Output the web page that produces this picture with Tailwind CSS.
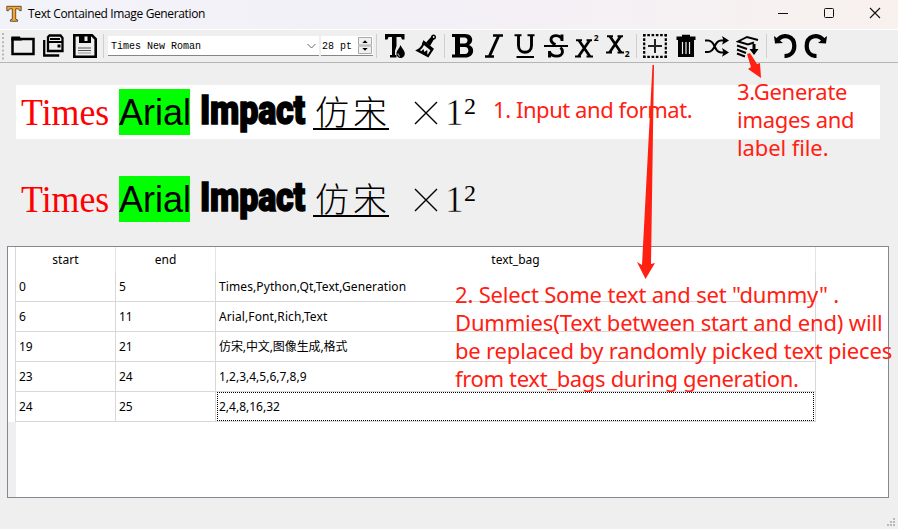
<!DOCTYPE html>
<html lang="en">
<head>
<meta charset="utf-8">
<title>Text Contained Image Generation</title>
<script src="https://cdn.jsdelivr.net/npm/@tailwindcss/browser@4"></script>
</head>
<body class="w-[898px] h-[529px] overflow-hidden bg-[#efefef] text-black font-['Noto_Sans','Noto_Sans_CJK_SC',sans-serif]">
<div class="relative w-[898px] h-[529px] flex flex-col overflow-hidden">

  <!-- Title bar -->
  <header class="h-[29px] shrink-0 flex items-center bg-linear-to-r from-[#f2f3f9] via-[#f3f0f7] to-[#f8f1ee]">
    <svg class="ml-[6px] w-4 h-[18px] -mt-[2px] shrink-0" viewBox="0 0 16 18"><path d="M.8 1.3h14.4v4.4h-1.7l-1-1.9H9.7v10.4l1.9.6v1.500H4.4v-1.500l1.900-.6V3.800H3.500l-1 1.900H.8z" fill="#f9a531" stroke="#44351f" stroke-width=".8"/></svg>
    <span class="ml-[6px] -mt-px w-[178px] text-[12px] leading-4 whitespace-nowrap font-['Open_Sans','Noto_Sans',sans-serif] tracking-[-0.36px]">Text Contained Image Generation</span>
    <div class="ml-auto mr-[17px] -mt-[3px] flex items-center gap-[34px]">
      <svg class="w-[12px] h-[12px]" viewBox="0 0 12 12"><path d="M1 6.500h10" stroke="#111"/></svg>
      <svg class="w-[12px] h-[12px]" viewBox="0 0 12 12"><rect x="1.500" y="1.500" width="9" height="9" rx="1" fill="none" stroke="#111"/></svg>
      <svg class="w-[12px] h-[12px]" viewBox="0 0 12 12"><path d="M1 1l10 10M11 1L1 11" stroke="#111" stroke-width="1.100"/></svg>
    </div>
  </header>

  <!-- Toolbar -->
  <div class="h-[34px] shrink-0 flex items-start border-t border-t-white border-b border-b-[#b5b5b5] pt-[4px] pl-[2px]">
    <svg class="w-[3px] h-[27px] mr-[6px] shrink-0 -mt-px" viewBox="0 0 3 27"><path d="M1 0v27" stroke="#b8b8b8" stroke-width="2" stroke-dasharray="2 2.1"/></svg>
    <svg class="w-6 h-6 mr-[7px] shrink-0" viewBox="0 0 24 24"><path d="M1.500 20V5h21v15z" fill="none" stroke="#000" stroke-width="2.500"/><path d="M.3 2.500h8.500L11 6.500H.3z"/></svg>
    <svg class="w-6 h-6 mr-[7px] shrink-0" viewBox="0 0 24 24"><path d="M6 3l1.500-1.500h11l2 2.500v13H6z" fill="none" stroke="#000" stroke-width="2.300"/><path d="M6 8h14M8 5h10" stroke="#000" stroke-width="2"/><path d="M15.500 10.500h3v3h-3z"/><path d="M2.200 6v15.500h15" fill="none" stroke="#000" stroke-width="2.300"/></svg>
    <svg class="w-6 h-6 mr-[7px] shrink-0" viewBox="0 0 24 24"><path d="M1.300 1.300h17.700l3.700 3.700v17.700H1.300z" fill="none" stroke="#000" stroke-width="2.600"/><path d="M6 1h12v8H6z"/><path d="M11.500 2.500h3v4.500h-3z" fill="#efefef"/><path d="M5 14h13M5 16.500h13" stroke="#555" stroke-width="1.200"/><path d="M5 19h13" stroke="#999"/></svg>
    <i class="w-px h-6 -ml-px mr-[4px] bg-[#cfcfcf] shrink-0"></i>

    <div class="mt-[2px] w-[211px] h-[20px] mr-[2px] shrink-0 bg-white border-b border-[#868686] flex items-center pl-[3px] pr-[3px] font-['Liberation_Mono',monospace] text-[10px]">
      <span class="whitespace-nowrap mt-[2px]">Times New Roman</span>
      <svg class="ml-auto w-[9px] h-[6px]" viewBox="0 0 9 6"><path d="M.5 1l4 4 4-4" fill="none" stroke="#666"/></svg>
    </div>
    <div class="mt-[2px] w-[52px] h-[20px] mr-[4px] shrink-0 bg-white border-b border-[#868686] flex items-center pl-[1px] font-['Liberation_Mono',monospace] text-[10px]">
      <span class="whitespace-nowrap mt-[2px]">28 pt</span>
      <svg class="ml-auto mr-[1px] w-[14px] h-[17px]" viewBox="0 0 14 17"><path d="M.5.5h13v7.500H.5zM.5 9h13v7.500H.5z" fill="#f0f0f0" stroke="#aaa"/><path d="M4.300 6L7 3.300 9.700 6zM4.300 11L7 13.700 9.700 11z"/></svg>
    </div>
    <i class="w-px h-6 -ml-px mr-[6px] bg-[#cfcfcf] shrink-0"></i>

    <svg class="w-6 h-6 mr-[7px] shrink-0" viewBox="0 0 24 24"><path d="M2 0h19.500v5.500H19L18 3h-4.500v9l-1.500 5v4h1.500v2.500H7V21h2V3H5.500l-1 2.500H2z"/><path d="M17.500 11c1.500 3.500 4.300 5.500 4.300 8.700a4.200 4.200 0 0 1-8.400 0c0-3.200 3-5.200 4.100-8.700z"/><path d="M15 19.500c0 1.500.7 2.300 2 2.700" fill="none" stroke="#efefef" stroke-width=".9"/></svg>
    <svg class="w-6 h-6 mr-[7px] shrink-0" viewBox="0 0 24 24"><path d="M12 8.500L17 3c0-3.500 5.500-3.500 5 .5-.2 1.500-1.500 2-2.500 2.500L16 12z"/><path d="M10 8L18.500 15l-4.500 7L3.500 16.500C6.500 15 9 12 10 8z" fill="none" stroke="#000" stroke-width="2.100"/><path d="M4.500 16l3 1 2-2 .8 3 3-2v5l-1 1z"/><path d="M9.500 6.500l10 8.500-1.500 2.500-10-8z"/><circle cx="19.700" cy="3" r=".9" fill="#efefef"/></svg>
    <i class="w-px h-6 -ml-px mr-[6px] bg-[#cfcfcf] shrink-0"></i>

    <svg class="w-6 h-6 mr-[7px] shrink-0" viewBox="0 0 24 24"><path fill-rule="evenodd" d="M1 0h13c8.500 0 9 8.500 4 11 6.500 2 5.500 12.500-4 12.500H1v-3h3V3H1zM9 3.500v6h4.500c4 0 4-6 0-6zM9 13v7h5c4.500 0 4.500-7 0-7z"/></svg>
    <svg class="w-6 h-6 mr-[7px] shrink-0" viewBox="0 0 24 24"><path d="M11 1.500h10M3 22.500h9" stroke="#000" stroke-width="2.600"/><path d="M16.500 2L7.500 22" stroke="#000" stroke-width="3"/></svg>
    <svg class="w-6 h-6 mr-[7px] shrink-0" viewBox="0 0 24 24"><path d="M1.500 1.200h7M14.500 1.200h7M3.500 23h17.500" stroke="#000" stroke-width="2"/><path d="M5.500 1v10.500c0 9 13 9 13 0V1" fill="none" stroke="#000" stroke-width="2.900"/></svg>
    <svg class="w-6 h-6 mr-[7px] shrink-0" viewBox="0 0 24 24"><path d="M18 7V.5M18 6C17 .5 7 0 7 5.500c0 3 2 4 4.500 5M5.500 23.500V17M5.500 18c2 5.500 13 5.500 13-.3 0-2-.8-3.200-2-4.200" fill="none" stroke="#000" stroke-width="2.900"/><path d="M0 12h24" stroke="#000" stroke-width="2"/></svg>
    <svg class="w-6 h-6 mr-[7px] shrink-0 overflow-visible" viewBox="0 0 24 24"><path d="M1 6.300h6M11.500 6.300H17M0 22.500h6M11.500 22.500H18" stroke="#000" stroke-width="2.100"/><path d="M4 6.500l11 16M14.500 6.500L3.500 22.500" stroke="#000" stroke-width="2.700"/><text x="18.800" y="7" font-size="8.500" font-weight="700" font-family="Noto Sans">2</text></svg>
    <svg class="w-6 h-6 mr-[7px] shrink-0 overflow-visible" viewBox="0 0 24 24"><path d="M1 2.200h6M11.500 2.200H17M0 18.500h6M11.500 18.500H18" stroke="#000" stroke-width="2.100"/><path d="M4 2.500l11 16M14.500 2.500L3.500 18.500" stroke="#000" stroke-width="2.700"/><text x="18.800" y="23" font-size="8.500" font-weight="700" font-family="Noto Sans">2</text></svg>
    <i class="w-px h-6 -ml-px mr-[6px] bg-[#cfcfcf] shrink-0"></i>

    <svg class="w-6 h-6 mr-[7px] shrink-0" viewBox="0 0 24 24"><path d="M0 1.200h24M0 22.800h24" stroke="#000" stroke-width="2.200" stroke-dasharray="2.600 1.680"/><path d="M1.200 0v24M22.800 0v24" stroke="#000" stroke-width="2.200" stroke-dasharray="2.600 1.680"/><path d="M12 5v14M5 12h14" stroke="#222" stroke-width="2"/></svg>
    <svg class="w-6 h-6 mr-[7px] shrink-0" viewBox="0 0 24 24"><path d="M8 .8h8v1.700h5.500V6h-19V2.500H8z"/><path d="M4 5h16v18H4z"/><path d="M8.500 8v12M12 8v12M15.500 8v12" stroke="#efefef" stroke-width="1.200"/></svg>
    <svg class="w-6 h-6 mr-[7px] shrink-0" viewBox="0 0 24 24"><path d="M0 6.500h3c8 0 5.500 12 13 12h5M0 18h3c8 0 5.500-11.500 13-11.500h5" fill="none" stroke="#000" stroke-width="2.200"/><path d="M17 2l7 4.500-7 4.300 1.500-4.300zM17 14l7 4.500-7 4.300 1.500-4.300z"/></svg>
    <svg class="w-6 h-6 mr-[7px] shrink-0" viewBox="0 0 24 24"><path d="M22 6L11 3 2 7.500l10 3 6-2M1 11.500l10 3.500M1 15.500l9 3.500M1 19.500l8 3" fill="none" stroke="#000" stroke-width="1.900"/><path d="M18 10v7" stroke="#000" stroke-width="3"/><path d="M13.500 15h9l-4.500 6z"/></svg>
    <i class="w-px h-6 -ml-px mr-[6px] bg-[#cfcfcf] shrink-0"></i>

    <svg class="w-6 h-6 mr-[7px] shrink-0" viewBox="0 0 24 24"><path d="M4 7C10-1.500 21.300 2 21.300 12c0 6-4 10-9.800 10" fill="none" stroke="#000" stroke-width="4.200"/><path d="M1 2l1 7.500 8-.5z"/></svg>
    <svg class="w-6 h-6 shrink-0" viewBox="0 0 24 24"><path d="M20 7C14-1.500 2.700 2 2.700 12c0 6 4 10 9.800 10" fill="none" stroke="#000" stroke-width="4.200"/><path d="M23 2l-1 7.500-8-.5z"/></svg>
  </div>

  <!-- Editor -->
  <div class="mt-[22px] ml-[16px] w-[864px] h-[54px] shrink-0 bg-white flex items-start pt-[4px] pl-[5px] text-[37.330px] leading-[46px] whitespace-nowrap">
    <span class="w-[98px] shrink-0 text-[#f00] font-['Liberation_Serif',serif]"><span class="inline-block origin-left scale-x-[0.96] translate-y-px">Times</span></span>
    <span class="w-[71px] h-[46px] shrink-0 bg-[#0f0] font-['Liberation_Sans',sans-serif]"><span class="inline-block origin-left scale-x-[0.965]">Arial</span></span>
    <span class="w-[112px] ml-[10px] shrink-0"><span class="inline-block origin-left scale-x-[0.85] -translate-y-[2px] text-[40px] tracking-[-0.2px] font-black font-['Roboto',sans-serif] [-webkit-text-stroke:1.5px_black]">Impact</span></span>
    <span class="w-[76px] h-[41px] ml-px shrink-0 border-b-2 border-black text-[34px] tracking-[4px] pl-[2px] leading-[44px] font-['Noto_Sans_CJK_SC',sans-serif] font-light">仿宋</span>
    <svg class="w-[24px] h-[24px] ml-[25px] mt-[12px] shrink-0" viewBox="0 0 24 24"><path d="M1 1l22 22M23 1L1 23" stroke="#000" stroke-width="1.400"/></svg>
    <span class="ml-[7px] w-[19px] shrink-0 font-['Liberation_Serif',serif] [-webkit-text-stroke:0.5px_white]"><span class="inline-block translate-y-px">1</span></span>
    <span class="shrink-0 text-[24px] leading-[34px] font-['Liberation_Serif',serif]">2</span>
  </div>

  <!-- Preview -->
  <div class="mt-[33px] ml-[16px] w-[864px] h-[54px] shrink-0 flex items-start pt-[4px] pl-[5px] text-[37.330px] leading-[46px] whitespace-nowrap">
    <span class="w-[98px] shrink-0 text-[#f00] font-['Liberation_Serif',serif]"><span class="inline-block origin-left scale-x-[0.96] translate-y-px">Times</span></span>
    <span class="w-[71px] h-[46px] shrink-0 bg-[#0f0] font-['Liberation_Sans',sans-serif]"><span class="inline-block origin-left scale-x-[0.965]">Arial</span></span>
    <span class="w-[112px] ml-[10px] shrink-0"><span class="inline-block origin-left scale-x-[0.85] -translate-y-[2px] text-[40px] tracking-[-0.2px] font-black font-['Roboto',sans-serif] [-webkit-text-stroke:1.5px_black]">Impact</span></span>
    <span class="w-[76px] h-[41px] ml-px shrink-0 border-b-2 border-black text-[34px] tracking-[4px] pl-[2px] leading-[44px] font-['Noto_Sans_CJK_SC',sans-serif] font-light">仿宋</span>
    <svg class="w-[24px] h-[24px] ml-[25px] mt-[12px] shrink-0" viewBox="0 0 24 24"><path d="M1 1l22 22M23 1L1 23" stroke="#000" stroke-width="1.400"/></svg>
    <span class="ml-[7px] w-[19px] shrink-0 font-['Liberation_Serif',serif] [-webkit-text-stroke:0.5px_#efefef]"><span class="inline-block translate-y-px">1</span></span>
    <span class="shrink-0 text-[24px] leading-[34px] font-['Liberation_Serif',serif]">2</span>
  </div>

  <!-- Table -->
  <div class="mt-[20px] ml-[7px] w-[882px] h-[252px] shrink-0 border border-[#828790] bg-white flex text-[12px]">
    <div class="w-[8px] shrink-0 flex flex-col"><div class="h-[175px] border-r border-[#d8d8d8]"></div><div class="flex-1 bg-[#efefef]"></div></div>
    <div class="grid grid-cols-[100px_100px_600px] auto-rows-[30px] content-start">
      <div class="h-[25px] border-r border-[#e5e5e5] flex items-center justify-center pt-[1px] tracking-[0.1px]">start</div>
      <div class="h-[25px] border-r border-[#e5e5e5] flex items-center justify-center pt-[1px]">end</div>
      <div class="h-[25px] border-r border-[#e5e5e5] flex items-center justify-center pt-[1px]">text_bag</div>

      <div class="-mt-[5px] h-[30px] border-r border-b border-[#d8d8d8] flex items-center pl-[3px]">0</div>
      <div class="-mt-[5px] h-[30px] border-r border-b border-[#d8d8d8] flex items-center pl-[3px]">5</div>
      <div class="-mt-[5px] h-[30px] border-r border-b border-[#d8d8d8] flex items-center pl-[3px] tracking-[0.1px]">Times,Python,Qt,Text,Generation</div>

      <div class="-mt-[5px] h-[30px] border-r border-b border-[#d8d8d8] flex items-center pl-[3px]">6</div>
      <div class="-mt-[5px] h-[30px] border-r border-b border-[#d8d8d8] flex items-center pl-[3px]">11</div>
      <div class="-mt-[5px] h-[30px] border-r border-b border-[#d8d8d8] flex items-center pl-[3px] tracking-[0.1px]">Arial,Font,Rich,Text</div>

      <div class="-mt-[5px] h-[30px] border-r border-b border-[#d8d8d8] flex items-center pl-[3px]">19</div>
      <div class="-mt-[5px] h-[30px] border-r border-b border-[#d8d8d8] flex items-center pl-[3px]">21</div>
      <div class="-mt-[5px] h-[30px] border-r border-b border-[#d8d8d8] flex items-center pl-[3px] tracking-[-0.1px]">仿宋,中文,图像生成,格式</div>

      <div class="-mt-[5px] h-[30px] border-r border-b border-[#d8d8d8] flex items-center pl-[3px]">23</div>
      <div class="-mt-[5px] h-[30px] border-r border-b border-[#d8d8d8] flex items-center pl-[3px]">24</div>
      <div class="-mt-[5px] h-[30px] border-r border-b border-[#d8d8d8] flex items-center pl-[3px]">1,2,3,4,5,6,7,8,9</div>

      <div class="-mt-[5px] h-[30px] border-r border-b border-[#d8d8d8] flex items-center pl-[3px]">24</div>
      <div class="-mt-[5px] h-[30px] border-r border-b border-[#d8d8d8] flex items-center pl-[3px]">25</div>
      <div class="-mt-[5px] h-[30px] border-r border-b border-[#d8d8d8] px-px"><div class="h-[29px] border border-dotted border-black flex items-center pl-[1px]">2,4,8,16,32</div></div>
    </div>
  </div>

  <!-- Size grip -->
  <svg class="ml-auto mt-auto mb-[2px] w-[12px] h-[9px] shrink-0" viewBox="0 0 12 9"><path d="M7 0h2v2H7zM4 3h2v2H4zM7 3h2v2H7zM1 6h2v2H1zM4 6h2v2H4zM7 6h2v2H7z" fill="#b9b9b9"/></svg>

  <!-- Annotations -->
  <div class="absolute inset-0 pointer-events-none text-[#ff2012] text-[22px] leading-[28px] whitespace-nowrap">
    <p class="absolute left-[493px] top-[95px] tracking-[-0.44px]">1. Input and format.</p>
    <div class="absolute left-[737px] top-[77px] tracking-[-0.3px]"><p>3.Generate</p><p>images and</p><p class="tracking-[-0.1px]">label file.</p></div>
    <div class="absolute left-[455px] top-[280px]"><p class="tracking-[-0.18px]">2. Select Some text and set "dummy" .</p><p class="tracking-[-0.17px]">Dummies(Text between start and end) will</p><p class="tracking-[-0.18px]">be replaced by randomly picked text pieces</p><p class="tracking-[-0.34px]">from text_bags during generation.</p></div>
    <svg class="absolute inset-0 w-[898px] h-[529px]" viewBox="0 0 898 529"><path fill="#ff2012" d="M652.500 65h1.500l-3 199 4-1-9.500 16-8.500-17 5 3zM747 54l3-1 7 11 3-1 1 15-13-9 3-2z"/></svg>
  </div>
</div>
</body>
</html>
